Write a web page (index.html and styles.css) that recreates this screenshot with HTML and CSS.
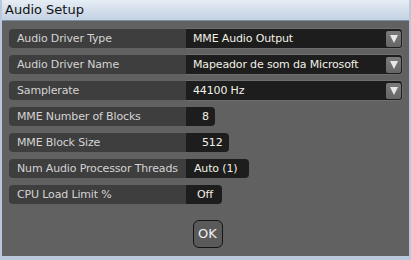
FILE: index.html
```html
<!DOCTYPE html>
<html>
<head>
	<title>Audio Setup</title>
	<link rel="stylesheet" href="styles.css">
</head>
<body>

	<div class="ui-window">

		<div class="ui-window-title">Audio Setup</div>

		<div class="ui-window-content">

			<div class="ui-row">
				<div class="ui-label">Audio Driver Type</div>
				<div class="ui-value ui-select">
					<span>MME Audio Output</span>
					<a href="javascript:;" class="ui-select-button"></a>
				</div>
			</div>

			<div class="ui-row">
				<div class="ui-label">Audio Driver Name</div>
				<div class="ui-value ui-select">
					<span>Mapeador de som da Microsoft</span>
					<a href="javascript:;" class="ui-select-button"></a>
				</div>
			</div>

			<div class="ui-row">
				<div class="ui-label">Samplerate</div>
				<div class="ui-value ui-select">
					<span>44100 Hz</span>
					<a href="javascript:;" class="ui-select-button"></a>
				</div>
			</div>

			<div class="ui-row">
				<div class="ui-label">MME Number of Blocks</div>
				<div class="ui-value ui-number">8</div>
			</div>

			<div class="ui-row">
				<div class="ui-label">MME Block Size</div>
				<div class="ui-value ui-number">512</div>
			</div>

			<div class="ui-row">
				<div class="ui-label">Num Audio Processor Threads</div>
				<div class="ui-value ui-wide">Auto (1)</div>
			</div>

			<div class="ui-row">
				<div class="ui-label">CPU Load Limit %</div>
				<div class="ui-value ui-toggle">Off</div>
			</div>

			<div class="ui-footer">
				<a href="javascript:;" class="ui-button">OK</a>
			</div>
		</div>
	</div>

</body>
</html>
```

FILE: styles.css
```css
body {
	margin: 0px;
	padding: 0px;
	width: 411px;
	height: 260px;
	overflow: hidden;
	font-family: "DejaVu Sans", sans-serif;
	font-size: 11px;
	background: #b9c8da;
}

.ui-window {
	height: 256px;
	display: flex;
	flex-direction: column;
	border-left: 2px solid #b9c8da;
	border-right: 2px solid #b9c8da;
	background: #616161;
}

.ui-window a {
	text-decoration: none;
}

.ui-window-title {
	height: 20px;
	line-height: 20px;
	padding-left: 3px;
	font-size: 13px;
	color: #111;
	background: linear-gradient(#e6edf5, #c3d1e2);
	border-bottom: 1px solid #8090a4;
	flex-shrink: 0;
}

.ui-window-content {
	padding: 8px 6px 0px 7px;
	display: flex;
	flex-direction: column;
	gap: 7px;
}

.ui-row {
	display: flex;
	height: 19px;
	line-height: 19px;
	white-space: nowrap;
	letter-spacing: -0.15px;
}

.ui-label {
	width: 169px;
	flex-shrink: 0;
	padding-left: 8px;
	color: #d4d4d4;
	background: #3e3e3e;
	border-radius: 4px 0px 0px 4px;
	overflow: hidden;
}

.ui-value {
	padding: 0px 8px 0px 7px;
	color: #f2f0e4;
	background: #1d1d1d;
	border-radius: 0px 4px 4px 0px;
}

.ui-number {
	padding-left: 16px;
	padding-right: 6px;
}

.ui-wide {
	padding-left: 8px;
	padding-right: 12px;
}

.ui-toggle {
	padding-left: 11px;
	padding-right: 9px;
}

.ui-select {
	flex: 1;
	display: flex;
	align-items: center;
	justify-content: space-between;
	padding-right: 1px;
	border: 1px solid #6e6e6e;
	border-left: none;
	margin-top: -1px;
	margin-bottom: -1px;
}

.ui-select-button {
	width: 15px;
	height: 16px;
	display: flex;
	align-items: center;
	justify-content: center;
	background: linear-gradient(#7a7a7a, #666);
	border-radius: 2px;
}

.ui-select-button::after {
	content: "";
	border-left: 4px solid transparent;
	border-right: 4px solid transparent;
	border-top: 8px solid #e8e8e8;
}

.ui-footer {
	display: flex;
	justify-content: center;
	padding-top: 9px;
}

.ui-button {
	width: 28px;
	height: 26px;
	line-height: 26px;
	text-align: center;
	font-size: 13px;
	color: #f0f0f0;
	background: #5a5a5a;
	border: 1px solid #151515;
	border-radius: 6px;
	margin-left: 3px;
}
```
